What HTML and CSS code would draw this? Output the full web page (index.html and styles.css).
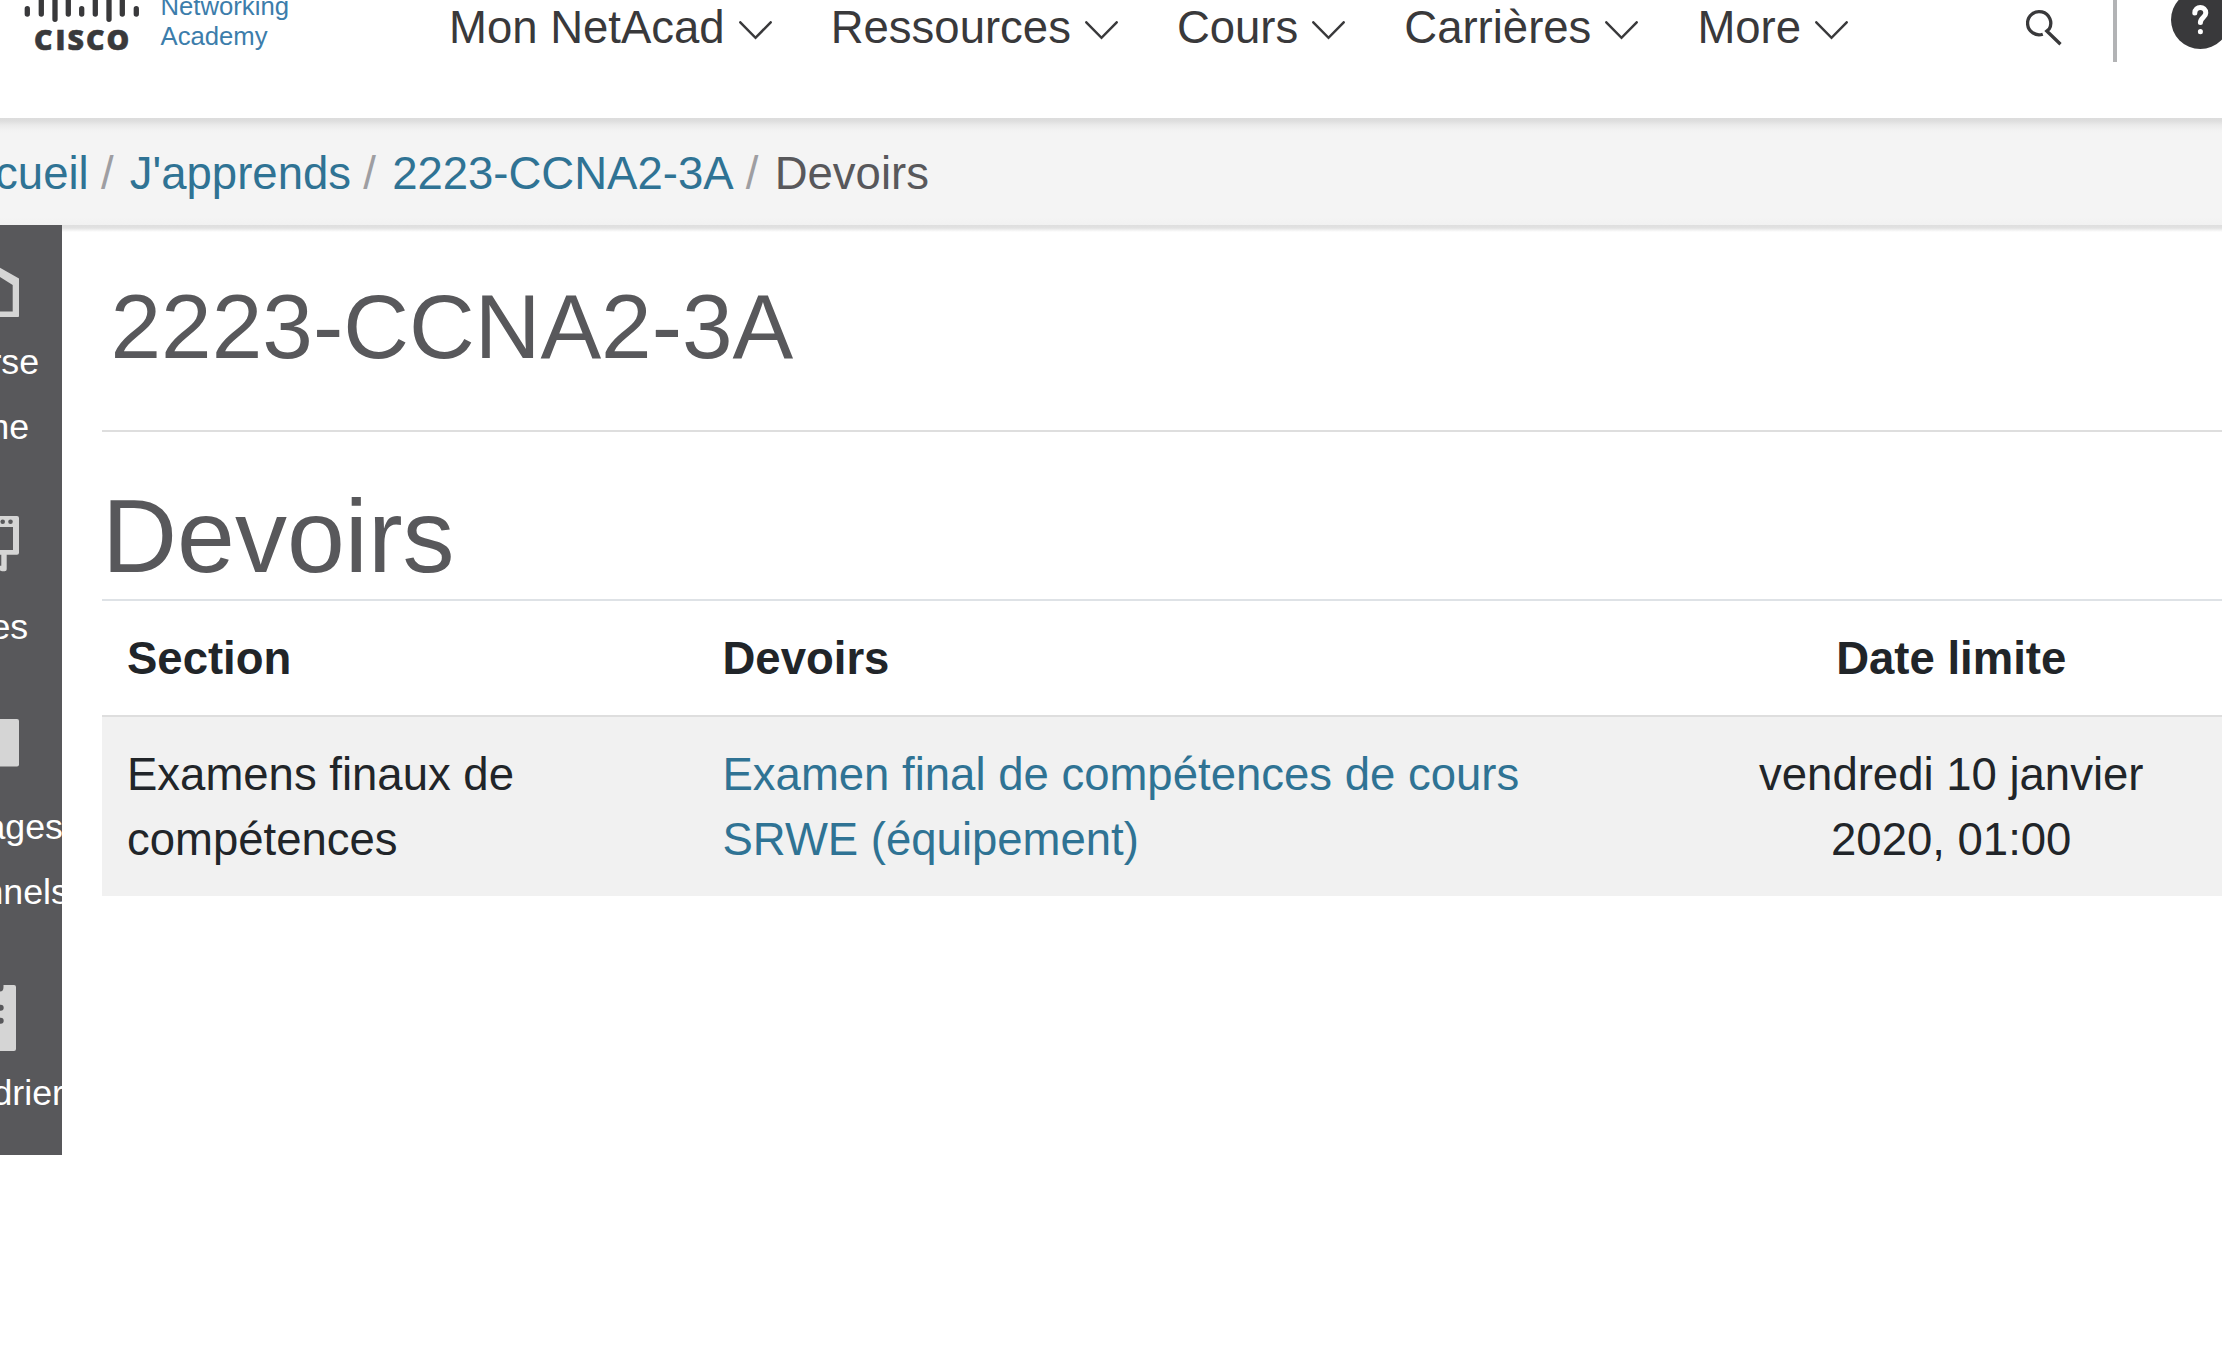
FILE: index.html
```html
<!DOCTYPE html>
<html lang="fr">
<head>
<meta charset="utf-8">
<title>2223-CCNA2-3A : Devoirs</title>
<link rel="stylesheet" href="styles.css">
</head>
<body>
<header class="topbar">
  <a class="brand">
    <svg class="brand-mark" width="116" height="54" viewBox="24 0 116 54">
      <g stroke="#39393b" stroke-width="5.3" stroke-linecap="round">
        <path d="M27.3 8.7V14M41.3-4V14M55-4V19.3M68.3-4V14M81.7 8.7V14M95.3-4V14M109-4V19.3M122.3-4V14M136.3 8.7V14"/>
      </g>
      <text class="brand-name" x="34 55.5 67.5 86 106.5" y="50.3">CISCO</text>
    </svg>
    <span class="brand-text">Networking<br>Academy</span>
  </a>
  <nav class="menu">
    <a class="menu-item">Mon NetAcad <svg class="chevron" viewBox="0 0 33 19"><path d="M1.3 1.3 16.5 16.8 31.7 1.3"/></svg></a>
    <a class="menu-item">Ressources <svg class="chevron" viewBox="0 0 33 19"><path d="M1.3 1.3 16.5 16.8 31.7 1.3"/></svg></a>
    <a class="menu-item">Cours <svg class="chevron" viewBox="0 0 33 19"><path d="M1.3 1.3 16.5 16.8 31.7 1.3"/></svg></a>
    <a class="menu-item">Carrières <svg class="chevron" viewBox="0 0 33 19"><path d="M1.3 1.3 16.5 16.8 31.7 1.3"/></svg></a>
    <a class="menu-item">More <svg class="chevron" viewBox="0 0 33 19"><path d="M1.3 1.3 16.5 16.8 31.7 1.3"/></svg></a>
  </nav>
  <div class="tools">
    <svg class="search" width="38" height="50" viewBox="0 0 38 50"><path d="M16.8 34.2A11.6 11.6 0 1 1 23.2 29L20.8 31 34.5 44.2"/></svg>
    <span class="divider"></span>
    <svg class="help" width="59" height="50" viewBox="0 0 59 50">
      <circle cx="29.3" cy="19.7" r="29.3"/>
      <path d="M23.8 13C23.8 5.6 34.8 5.8 34.8 13 34.8 17.4 29.4 17.4 29.4 22.6M29.4 31.6V31.8"/>
    </svg>
  </div>
</header>
<nav class="crumbs">
  <a>Accueil</a><i>/</i><a>J'apprends</a><i>/</i><a>2223-CCNA2-3A</a><i>/</i><span>Devoirs</span>
</nav>
<div class="page">
  <aside class="side">
    <a class="side-item home">
      <svg width="75" height="60" viewBox="0 0 75 60"><path fill-rule="evenodd" d="M37.5 0 75 21V58Q75 60 73 60H2Q0 60 0 58V21ZM37.5 7.5 68.7 27.6V54H6.3V27.6Z" transform="translate(0 .5)"/></svg>
      <span>Course<br>Home</span>
    </a>
    <a class="side-item grades">
      <svg width="75" height="56" viewBox="0 0 75 56"><path fill-rule="evenodd" d="M2 0H73Q75 0 75 2V36.7Q75 38.7 73 38.7H62.7V53.3Q62.7 55.3 60.7 55.3H58L44 50V38.7H2Q0 38.7 0 36.7V2Q0 0 2 0ZM6 11V34H69V11ZM50 38.7V49.7H57.3V38.7Z"/><g class="hole"><circle cx="58.7" cy="5.8" r="2.3"/><circle cx="66.5" cy="5.8" r="2.3"/></g></svg>
      <span>Notes</span>
    </a>
    <a class="side-item mail">
      <svg width="75" height="48" viewBox="0 0 75 48"><rect width="75" height="47.5" rx="2"/></svg>
      <span>Messages<br>personnels</span>
    </a>
    <a class="side-item calendar">
      <svg width="69" height="66" viewBox="0 0 69 66"><path d="M2 0H12.5V2Q12.5 6.5 16 6.5H53Q56.5 6.5 56.5 2V0H67Q69 0 69 2V64Q69 66 67 66H2Q0 66 0 64V2Q0 0 2 0Z"/><g class="hole"><rect x="12" y="19.8" width="44.7" height="6" rx="3"/><rect x="12" y="32.8" width="44.7" height="6" rx="3"/></g></svg>
      <span>Calendrier</span>
    </a>
  </aside>
  <main class="content">
    <h1>2223-CCNA2-3A</h1>
    <h2>Devoirs</h2>
    <table class="tasks">
      <thead><tr><th class="section">Section</th><th class="task">Devoirs</th><th class="due">Date limite</th></tr></thead>
      <tbody><tr><td>Examens finaux de<br>compétences</td><td><a>Examen final de compétences de cours<br>SRWE (équipement)</a></td><td class="due">vendredi 10 janvier<br>2020, 01:00</td></tr></tbody>
    </table>
  </main>
</div>
</body>
</html>
```
FILE: styles.css
```css
* { box-sizing: border-box; }
body {
  margin: 0;
  width: 2222px;
  height: 1360px;
  overflow: hidden;
  background: #fff;
  color: #212529;
  font: 45.5px/65px "Liberation Sans", Arial, sans-serif;
}
.topbar {
  display: flex;
  align-items: flex-start;
  height: 118px;
  padding-left: 24px;
  overflow: hidden;
  color: #39393b;
}
.brand { display: flex; flex: none; gap: 20.5px; width: 425px; }
.brand-mark { flex: none; }
.brand-name { font: 800 28.5px "Open Sans", sans-serif; fill: #39393b; stroke: #39393b; stroke-width: .6px; }
.brand-text {
  margin-top: -9.5px;
  font-size: 25.7px;
  line-height: 30.5px;
  color: #3c7dab;
}
.menu { display: flex; flex: none; gap: 59px; width: 1577px; line-height: 56px; }
.menu-item { display: flex; gap: 14px; white-space: nowrap; }
.chevron {
  width: 33px;
  height: 19px;
  margin-top: 21px;
  fill: none;
  stroke: #39393b;
  stroke-width: 2.5;
  stroke-linecap: round;
}
.tools { display: flex; flex: none; }
.search { fill: none; stroke: #39393b; stroke-width: 3.3; }
.divider { width: 4px; height: 62px; margin: 0 54px 0 49px; background: #b2b3b5; }
.help { fill: #39393b; }
.help path { fill: none; stroke: #fff; stroke-width: 5; stroke-linecap: round; }
.crumbs {
  display: flex;
  height: 107px;
  margin-left: -58px;
  padding-top: 23px;
  white-space: nowrap;
  color: #58585b;
  background: linear-gradient(#dcdcdc 0, #dedede 3px, #eaeaea 7px, #f2f2f2 12px, #f4f4f4 16px, #f4f4f4 100px, #f1f1f1 107px);
}
.crumbs a, .tasks a { color: #2f7394; }
.crumbs i { margin: 0 16.3px 0 12.2px; font-style: normal; color: #9e9ea2; }
.page {
  display: flex;
  align-items: flex-start;
  background: linear-gradient(#dedede 0, #e2e2e2 3px, #fff 7px);
}
.side {
  flex: none;
  width: 161px;
  height: 930px;
  margin-left: -99px;
  overflow: hidden;
  background: #58585b;
  color: #fff;
  font-size: 35.75px;
}
.side-item {
  display: flex;
  flex-direction: column;
  align-items: center;
  text-align: center;
}
.side-item svg { flex: none; fill: #d5d5d5; }
.side-item .hole { fill: #58585b; }
.home { padding-top: 32px; gap: 13px; }
.grades { padding-top: 56px; gap: 23px; }
.mail { padding-top: 59px; gap: 28px; }
.calendar { padding-top: 60px; gap: 10px; }
.content { flex: 1; padding-left: 40px; }
h1, h2 { margin: 0; font-weight: 400; color: #58585b; }
h1 {
  height: 207px;
  padding: 50px 0 0 8.5px;
  border-bottom: 2px solid #dedede;
  font-size: 91px;
  line-height: 104px;
}
h2 { height: 167px; padding-top: 42px; font-size: 104px; line-height: 124px; }
.tasks { width: 2120px; table-layout: fixed; border-collapse: separate; border-spacing: 0; }
th, td { padding: 25px 24.5px 24px 25px; text-align: left; white-space: nowrap; vertical-align: top; }
th { height: 116px; border-top: 2px solid #dee2e6; }
td { border-top: 2px solid #dedede; background: #f1f1f1; height: 181px; }
.section { width: 595.5px; }
.task { width: 982.5px; }
.tasks .due { text-align: center; }
```
